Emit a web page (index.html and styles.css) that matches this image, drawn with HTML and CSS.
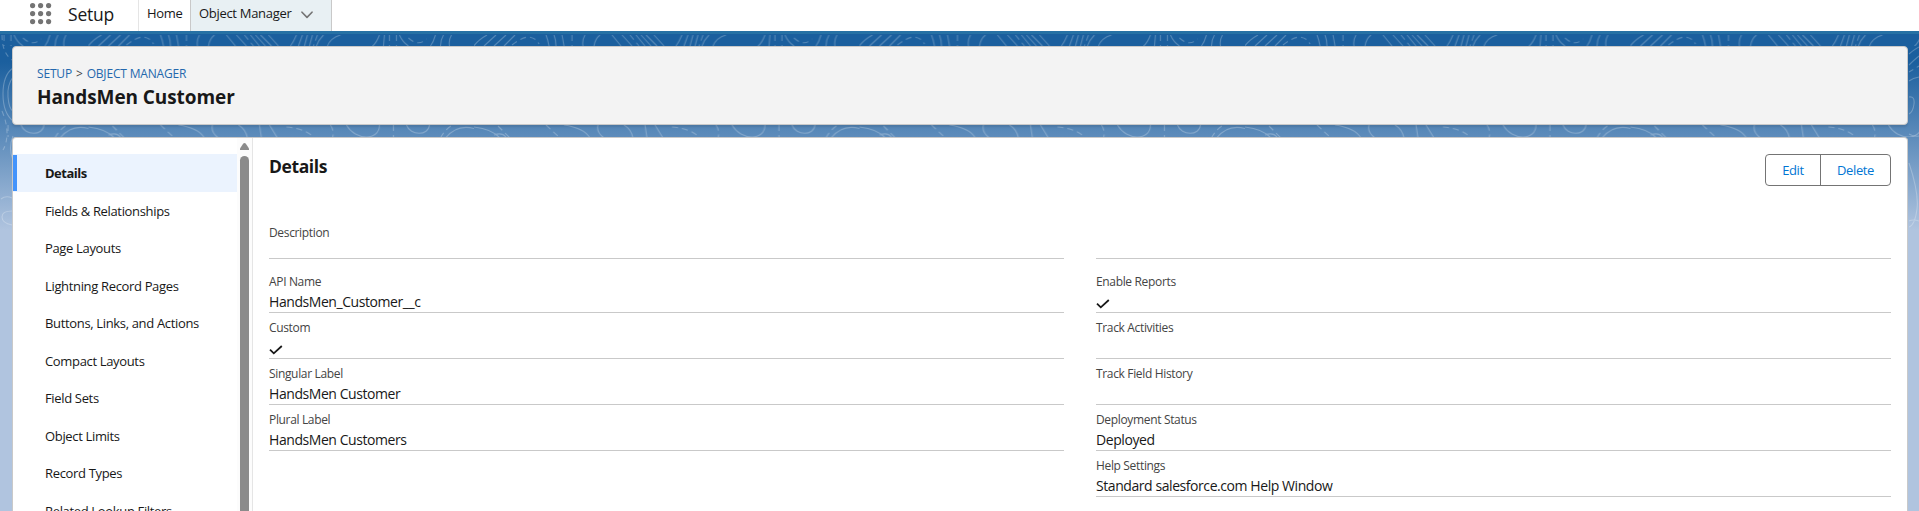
FILE: index.html
```html
<!DOCTYPE html>
<html lang="en">
<head>
<meta charset="utf-8">
<title>Setup | Object Manager</title>
<link rel="stylesheet" href="styles.css">
</head>
<body>
<header class="topbar">
  <svg class="waffle" width="22" height="22" viewBox="0 0 22 22" fill="#747474">
    <circle cx="2.6" cy="2.6" r="2.6"/><circle cx="10.6" cy="2.6" r="2.6"/><circle cx="18.6" cy="2.6" r="2.6"/>
    <circle cx="2.6" cy="10.6" r="2.6"/><circle cx="10.6" cy="10.6" r="2.6"/><circle cx="18.6" cy="10.6" r="2.6"/>
    <circle cx="2.6" cy="18.6" r="2.6"/><circle cx="10.6" cy="18.6" r="2.6"/><circle cx="18.6" cy="18.6" r="2.6"/>
  </svg>
  <span class="app-name">Setup</span>
  <a class="tab tab-home">Home</a>
  <a class="tab tab-active">Object Manager
    <svg class="chevron" width="12" height="8" viewBox="0 0 12 8" fill="none" stroke="#747474" stroke-width="1.6" stroke-linecap="round" stroke-linejoin="round"><path d="M1 1.2 6 6.4l5-5.2"/></svg>
  </a>
</header>
<main class="stage">
  <svg class="topography" width="1919" height="480" fill="none">
    <defs>
      <pattern id="contours" x="88.5" y="-31" width="385.5" height="511" patternUnits="userSpaceOnUse">
        <g stroke="#fff" stroke-opacity=".25" stroke-width="1.1" fill="none">
          <path d="M-1 47Q4 40 13 35M10 46 22 35M20 46 32 35M30 46 41 35M72 35q2 5 3 11M80 35q2 5 2 11M88 35q1 5 2 11M111 35q-3 5-2 11M126 35q-5 4-6 11M138 35l9 11M148 35l10 11M162 35l9 11M167 35l10 11M172 35l11 11M180 35l10 11M208 35q-3 7-6 11M214 35l-4 11M219 35l-3 11M224 35l-3 11M235 35q-5 5-7 11M252 35q-10 3-13 11M291 35q-3 8-7 11M296 35l-1 11M311 35q3 7 9 11M347 35q-2 7-5 11M355 35q-3 5-3 11M363 35q-3 5-2 11"/>
          <path stroke-dasharray="6 4" d="M38 45Q48 37 55 37 62 38 65 44M98 35v11M156 35l9 11M229 35l-4 11M301 35v11M308 35v11M320 38q10 9 18 1"/>
          <path d="M0 127Q18 129 26 138M20 135q8-3 12 2M90 125Q110 128 116 138M124 125q-2 7 6 13M150 125q7 4 9 13M171 125l2 13M181 125l8 13M258 125c9 16 33 16 33 0M318 125c4 11 22 11 23 0M357 138Q370 122 390 130"/>
          <path stroke-dasharray="6 4" d="M24 126l12 12M72 125l14 13M198 127q20 2 28 11M242 125q4 6 2 13M305 125v13M352 138q4-8 12-13"/>
        </g>
      </pattern>
    </defs>
    <rect y="4" width="1919" height="11" fill="url(#contours)"/>
    <rect y="94" width="1919" height="12" fill="url(#contours)"/>
    <g stroke="#fff" stroke-opacity=".25" stroke-width="1.1">
      <path d="M13 37Q3 44 3 63t10 27M13 46Q7 54 8 66t5 14"/>
      <path stroke-dasharray="5 4" d="M2 4q0 18 10 25M2 80q5 12 5 22t-4 17"/>
      <path d="M13 105q-5 12 0 24M1 168q5-4 11-1M12 180q-10 0-10 6t10 8"/>
      <path d="M1909 23q6-5 10-7M1909 34q5-5 10-9M1909 50q4-3 10-4M1909 66q6-1 5 7t-5 10M1909 103q5 3 10 2M1909 132q10 30 8 46t-8 18M1909 190q4-2 10 0"/>
      <path stroke-dasharray="5 4" d="M1909 41l10-6"/>
    </g>
  </svg>
  <section class="page-header">
    <div class="crumbs"><a>SETUP</a><span class="gt">&gt;</span><a>OBJECT MANAGER</a></div>
    <h1>HandsMen Customer</h1>
  </section>
  <section class="panel">
    <nav class="sidebar">
      <a class="item selected">Details</a>
      <a class="item">Fields &amp; Relationships</a>
      <a class="item">Page Layouts</a>
      <a class="item">Lightning Record Pages</a>
      <a class="item">Buttons, Links, and Actions</a>
      <a class="item">Compact Layouts</a>
      <a class="item">Field Sets</a>
      <a class="item">Object Limits</a>
      <a class="item">Record Types</a>
      <a class="item">Related Lookup Filters</a>
    </nav>
    <div class="scrollbar">
      <svg width="9" height="7" viewBox="0 0 9 7"><path fill="#8b8b8b" d="M3.3.6Q4.500-.4 5.700.6L9 5.400V7H0V5.400z"/></svg>
      <div class="thumb"></div>
    </div>
    <article class="detail">
      <div class="detail-head">
        <h2>Details</h2>
        <div class="buttons"><button>Edit</button><button>Delete</button></div>
      </div>
      <div class="columns">
        <div class="column">
          <div class="field tall"><span class="label">Description</span></div>
          <div class="field first"><span class="label">API Name</span><span class="value">HandsMen_Customer__c</span></div>
          <div class="field"><span class="label">Custom</span><svg class="check" width="14" height="10" viewBox="0 0 14 10" fill="none" stroke="#181818" stroke-width="1.8"><path d="M1 4.6 4.8 8.3 12.8 1"/></svg></div>
          <div class="field"><span class="label">Singular Label</span><span class="value">HandsMen Customer</span></div>
          <div class="field"><span class="label">Plural Label</span><span class="value">HandsMen Customers</span></div>
        </div>
        <div class="column">
          <div class="field tall"></div>
          <div class="field first"><span class="label">Enable Reports</span><svg class="check" width="14" height="10" viewBox="0 0 14 10" fill="none" stroke="#181818" stroke-width="1.8"><path d="M1 4.6 4.8 8.3 12.8 1"/></svg></div>
          <div class="field"><span class="label">Track Activities</span></div>
          <div class="field"><span class="label">Track Field History</span></div>
          <div class="field"><span class="label">Deployment Status</span><span class="value">Deployed</span></div>
          <div class="field"><span class="label">Help Settings</span><span class="value">Standard salesforce.com Help Window</span></div>
        </div>
      </div>
    </article>
  </section>
</main>
</body>
</html>
```
FILE: styles.css
```css
* { box-sizing: border-box; }
body {
  margin: 0;
  height: 511px;
  overflow: hidden;
  display: flex;
  flex-direction: column;
  font-family: "Open Sans", "Noto Sans", sans-serif;
  font-size: 13px;
  color: #181818;
  background: #fff;
}
.topbar {
  display: flex;
  height: 31px;
  flex: none;
  padding-left: 30px;
}
.waffle { margin-top: 3px; }
.app-name {
  width: 86px;
  padding-left: 16px;
  font-size: 17.5px;
  line-height: 28px;
  letter-spacing: -.2px;
}
.tab {
  line-height: 27px;
  font-size: 13px;
  letter-spacing: -.3px;
  white-space: nowrap;
}
.tab-home { width: 52px; padding-left: 8px; border-left: 1px solid #e5e5e5; }
.tab-active {
  display: flex;
  width: 142px;
  padding-left: 8px;
  background: #e8f0f3;
  border: solid #c9c9c9;
  border-width: 0 1px;
}
.chevron { margin: 11px 0 0 10px; }
.stage {
  position: relative;
  flex: 1;
  min-height: 0;
  display: flex;
  flex-direction: column;
  gap: 12px;
  padding: 12px 11px 0 12px;
  border-top: 3px solid #2771a4;
  background: linear-gradient(#1b5f9e 0, #1b5f9e 28px, #b0c4df 196px);
}
.topography { position: absolute; left: 0; top: -3px; }
.page-header {
  position: relative;
  flex: none;
  height: 79px;
  padding: 19px 24px 0;
  background: #f3f3f3;
  border: 1px solid #c9c9c9;
  border-radius: 4px;
  box-shadow: 0 2px 2px rgba(0, 0, 0, .1);
}
.crumbs {
  display: flex;
  height: 17px;
  line-height: 16px;
  font-size: 12px;
  letter-spacing: -.18px;
  color: #2468ad;
}
.gt { margin: 0 4px; color: #444; }
h1 {
  margin: 1px 0 0;
  font-size: 19px;
  line-height: 26px;
  letter-spacing: -.08px;
}
.panel {
  position: relative;
  flex: 1;
  min-height: 0;
  display: flex;
  background: #fff;
  border: 1px solid #c9c9c9;
  border-bottom: 0;
  border-radius: 4px 4px 0 0;
  overflow: hidden;
}
.sidebar { width: 224px; padding-top: 16px; }
.item {
  display: block;
  height: 37.5px;
  padding-left: 32px;
  line-height: 38.6px;
  font-size: 13px;
  letter-spacing: -.34px;
  white-space: nowrap;
}
.selected {
  background: linear-gradient(#4393fb, #4393fb) 0 1px / 4px 36px no-repeat, #ebf3fe;
  font-weight: 700;
  letter-spacing: -.5px;
}
.scrollbar {
  width: 15px;
  display: flex;
  flex-direction: column;
  align-items: center;
  gap: 6px;
  padding-top: 5px;
  background: #fcfcfc;
}
.scrollbar svg { flex: none; }
.thumb { width: 9px; flex: 1; background: #8b8b8b; border-radius: 5px 5px 0 0; }
.detail { flex: 1; border-left: 1px solid #e5e5e5; padding: 16px 16px 0; }
.detail-head { display: flex; justify-content: space-between; height: 65px; }
h2 { margin: 0; font-size: 17.5px; line-height: 24px; letter-spacing: -.4px; }
.buttons {
  display: flex;
  height: 32px;
  border: 1px solid #747474;
  border-radius: 4px;
}
button {
  width: 69px;
  padding: 0;
  border: 0;
  background: none;
  font: 13px/28px "Open Sans", sans-serif;
  letter-spacing: -.35px;
  color: #0176d3;
}
button:first-child { width: 55px; border-right: 1px solid #747474; }
.columns { display: grid; grid-template-columns: 1fr 1fr; gap: 32px; }
.field {
  display: flex;
  flex-direction: column;
  height: 46px;
  padding-top: 6px;
  border-bottom: 1px solid #c9c9c9;
}
.tall { height: 40px; padding-top: 5px; }
.first { height: 54px; padding-top: 14px; }
.label { flex: none; height: 19px; line-height: 17px; font-size: 12px; letter-spacing: -.34px; color: #444; white-space: nowrap; }
.value { flex: none; line-height: 20px; font-size: 14px; letter-spacing: -.43px; white-space: nowrap; }
.check { margin-top: 7px; flex: none; }
```
